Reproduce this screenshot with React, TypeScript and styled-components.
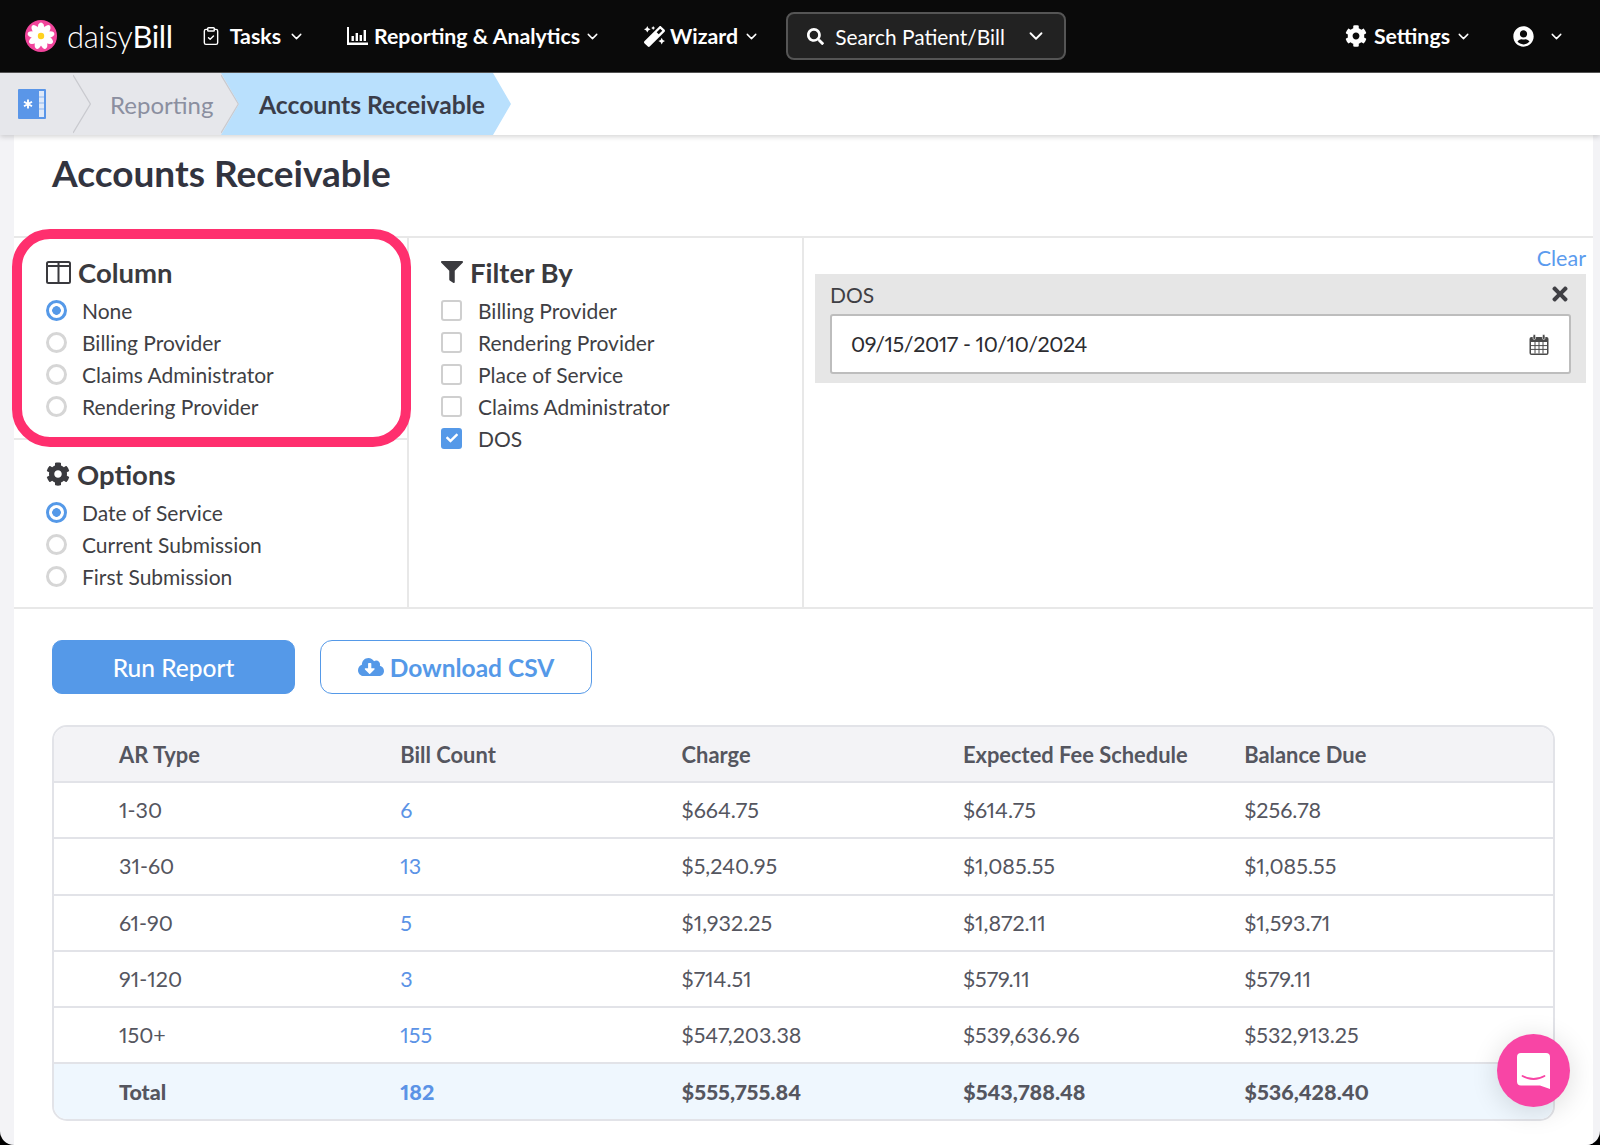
import React from "react"
import styled, { createGlobalStyle } from "styled-components"
import { ChevronDown, ClipboardCheck } from "lucide-react"
import {
  FaCheck,
  FaCloudDownloadAlt,
  FaCog,
  FaFilter,
  FaMagic,
  FaSearch,
  FaTimes,
  FaUserCircle,
} from "react-icons/fa"

const GlobalStyle = createGlobalStyle`
  html, body {
    margin: 0;
    padding: 0;
    background: #000;
  }
  * {
    box-sizing: border-box;
  }
  body {
    font-family: Lato, "Open Sans", Arial, sans-serif;
    font-variant-numeric: proportional-nums;
    color: #3a3a3e;
  }
`

const Page = styled.div`
  height: 1145px;
  overflow: hidden;
  background: #f3f3f6;
  border-radius: 0 0 14px 14px;
`

const Nav = styled.header`
  display: flex;
  align-items: center;
  height: 73px;
  padding-left: 25px;
  background: #0a0a0a;
  border-bottom: 1px solid #555;
  color: #fff;
`

const Brand = styled.div`
  display: flex;
  align-items: center;
  gap: 10px;
  margin-right: 28px;
  font-size: 31px;
  font-weight: 300;
  letter-spacing: -0.4px;

  b {
    font-weight: 400;
  }
`

const NavItem = styled.div<{ $left?: number; $gap?: number }>`
  display: flex;
  align-items: center;
  gap: ${({ $gap }) => $gap ?? 7}px;
  margin-left: ${({ $left }) => $left ?? 0}px;
  font-size: 21.3px;
  font-weight: 700;
  white-space: nowrap;
`

const NavChevron = styled(ChevronDown)<{ $pull?: number }>`
  margin-left: ${({ $pull }) => $pull ?? -2}px;
`

const SearchBox = styled.div`
  display: flex;
  align-items: center;
  width: 280px;
  height: 48px;
  margin-left: 26px;
  padding: 0 17px 0 19px;
  background: #222;
  border: 2px solid #555;
  border-radius: 8px;
  font-size: 20.9px;

  span {
    margin-left: 11px;
    flex: 1;
  }
`

const NavRight = styled.div`
  display: flex;
  align-items: center;
  margin-left: auto;
  padding-right: 35px;
`

const Breadcrumb = styled.nav`
  position: relative;
  display: flex;
  height: 62px;
  background: #fff;
  box-shadow: 0 2px 5px rgba(0, 0, 0, 0.16);
`

const Trail = styled.div`
  display: flex;
  align-items: center;
  width: 239px;
  padding-left: 18px;
  background: #e6e7eb;
`

const TrailGap = styled.span`
  width: 27px;
`

const TrailLink = styled.span`
  width: 103px;
  margin: 0 8px 0 19px;
  font-size: 24px;
  color: #8b8fa0;
  white-space: nowrap;
`

const CurrentCrumb = styled.div`
  display: flex;
  align-items: center;
  width: 290px;
  margin-left: -18px;
  padding-left: 38px;
  background: #b9e0fd;
  font-size: 24.7px;
  font-weight: 700;
  color: #3a3d4a;
  white-space: nowrap;
  clip-path: polygon(
    0 0,
    calc(100% - 18px) 0,
    100% 50%,
    calc(100% - 18px) 100%,
    0 100%,
    18px 50%
  );
`

const Main = styled.main`
  height: 1010px;
  margin: 0 7px 0 14px;
  background: #fff;
`

const Title = styled.h1`
  height: 101px;
  margin: 0;
  padding: 18px 0 0 38px;
  font-size: 37px;
  line-height: 40px;
  font-weight: 700;
  color: #32343f;
`

const Filters = styled.section`
  position: relative;
  display: grid;
  grid-template-columns: 395px 395px 1fr;
  height: 373px;
  border-top: 2px solid #e8e8e8;
  border-bottom: 2px solid #e8e8e8;
`

const Highlight = styled.aside`
  position: absolute;
  left: -2px;
  top: -9px;
  width: 399px;
  height: 218px;
  border: 10px solid #ff2f6e;
  border-radius: 38px;
  pointer-events: none;
`

const Col = styled.div`
  border-right: 2px solid #e8e8e8;

  &:last-of-type {
    border-right: 0;
  }
`

const Group = styled.div<{ $height?: number }>`
  height: ${({ $height }) => ($height ? `${$height}px` : "auto")};
  padding: 18px 0 0 32px;

  & + & {
    border-top: 2px solid #e8e8e8;
  }
`

const GroupTitle = styled.h2`
  display: flex;
  align-items: center;
  gap: 7px;
  height: 32px;
  margin: 0 0 6px;
  font-size: 27.5px;
  font-weight: 700;
  color: #3a3a3e;

  svg {
    flex: none;
  }
`

const Option = styled.div`
  display: flex;
  align-items: center;
  height: 32px;
  font-size: 21px;
  color: #3f3f44;
`

const Radio = styled.span<{ $on?: boolean }>`
  flex: none;
  width: 21px;
  height: 21px;
  margin-right: 15px;
  border-radius: 50%;
  border: 3px solid ${({ $on }) => ($on ? "#5599e8" : "#d6d6d6")};
  background: ${({ $on }) =>
    $on ? "radial-gradient(circle, #5599e8 0 4px, #fff 4.6px)" : "#fff"};
`

const Checkbox = styled.span<{ $on?: boolean }>`
  flex: none;
  display: flex;
  align-items: center;
  justify-content: center;
  width: 21px;
  height: 21px;
  margin-right: 16px;
  border-radius: 3px;
  border: ${({ $on }) => ($on ? "0" : "2px solid #cfcfcf")};
  background: ${({ $on }) => ($on ? "#5599e8" : "#fff")};
  color: #fff;
  font-size: 12px;
`

const ClearRow = styled.div`
  height: 25px;
  margin: 8px 7px 3px 0;
  text-align: right;
  font-size: 21.5px;
  line-height: 25px;
  color: #5b9bee;
`

const DatePanel = styled.div`
  height: 109px;
  margin: 0 7px 0 11px;
  padding: 0 15px;
  background: #e6e6e6;
`

const DateHead = styled.div`
  display: flex;
  align-items: center;
  justify-content: space-between;
  height: 40px;
  font-size: 21px;
  color: #3f3f44;
`

const DateInput = styled.div`
  display: flex;
  align-items: center;
  justify-content: space-between;
  height: 60px;
  padding: 0 20px 0 19px;
  background: #fff;
  border: 2px solid #bdbdbd;
  border-radius: 3px;
  font-size: 21.5px;
  letter-spacing: -0.4px;
  color: #2c2c30;
`

const Actions = styled.div`
  display: flex;
  gap: 25px;
  padding: 31px 0 31px 38px;
`

const Button = styled.button<{ $outline?: boolean }>`
  display: flex;
  align-items: center;
  justify-content: center;
  gap: 6px;
  width: ${({ $outline }) => ($outline ? 272 : 243)}px;
  height: 54px;
  padding: 0;
  border: 1.5px solid #5599e8;
  border-radius: ${({ $outline }) => ($outline ? 12 : 10)}px;
  background: ${({ $outline }) => ($outline ? "#fff" : "#5599e8")};
  color: ${({ $outline }) => ($outline ? "#5599e8" : "#fff")};
  font-family: inherit;
  font-size: 24.5px;
  font-weight: ${({ $outline }) => ($outline ? 700 : 500)};
`

const Table = styled.div`
  margin: 0 38px;
  border: 2px solid #e2e3e8;
  border-radius: 15px;
  overflow: hidden;
  color: #55565f;
  font-size: 21.5px;
`

const Row = styled.div<{ $kind?: "head" | "total" }>`
  display: grid;
  grid-template-columns: repeat(5, 281.3px);
  align-items: center;
  height: ${({ $kind }) => ($kind === "head" ? 54 : 56.3)}px;
  padding-left: 65px;
  background: ${({ $kind }) =>
    $kind === "head" ? "#f3f3f6" : $kind === "total" ? "#eff7fe" : "#fff"};
  font-size: ${({ $kind }) => ($kind === "head" ? 21.9 : 21.5)}px;
  font-weight: ${({ $kind }) => ($kind === "total" ? 900 : $kind === "head" ? 700 : 400)};

  & + & {
    border-top: 2px solid #e2e3e8;
  }
`

const CountLink = styled.span`
  color: #5b93e6;
`

const ChatButton = styled.div`
  position: fixed;
  left: 1497px;
  top: 1034px;
  display: flex;
  align-items: center;
  justify-content: center;
  width: 73px;
  height: 73px;
  border-radius: 50%;
  background: #f845a5;
  box-shadow: 0 4px 28px rgba(0, 0, 0, 0.14);
`

const Flower = () => (
  <svg width="32" height="32" viewBox="0 0 32 32">
    <circle cx="16" cy="16" r="16" fill="#f2459c" />
    {[0, 40, 80, 120, 160, 200, 240, 280, 320].map((deg) => (
      <ellipse
        key={deg}
        cx="16"
        cy="8.4"
        rx="3.4"
        ry="6"
        fill="#fff"
        transform={`rotate(${deg} 16 16)`}
      />
    ))}
    <circle cx="16" cy="16" r="3.2" fill="#ffd21f" />
  </svg>
)

const ChartIcon = () => (
  <svg width="21" height="18" viewBox="0 0 21 18" fill="#fff">
    <path d="M0 0h2v15.5h19V18H0z" />
    <path d="M4.5 9h2.4v5H4.5zM8.6 6h2.4v8H8.6zM12.6 8h2.4v6h-2.4zM16.6 3h2.4v11h-2.4z" />
  </svg>
)

const HomeIcon = () => (
  <svg width="28" height="30" viewBox="0 0 28 30" style={{ flex: "none" }}>
    <rect width="28" height="30" rx="1" fill="#5a96e8" />
    <rect x="21" y="2" width="5" height="26" fill="#dfe9f8" />
    <path d="M21 8h5M21 14h5M21 20h5" stroke="#8db5ee" strokeWidth="1" />
    <path
      d="M10 10.5v9M6 12.7l8 4.6M14 12.7l-8 4.6"
      stroke="#fff"
      strokeWidth="1.9"
      fill="none"
    />
  </svg>
)

const CrumbLine = () => (
  <svg width="18" height="62" viewBox="0 0 18 62" fill="none" style={{ flex: "none" }}>
    <path d="M0 2l17.4 29L0 60" stroke="#c9cacf" strokeWidth="1.3" />
  </svg>
)

const ColumnsIcon = () => (
  <svg width="25" height="23" viewBox="0 0 25 23" fill="none" stroke="#3a3a3e" strokeWidth="2">
    <rect x="1" y="1" width="23" height="21" rx="1.5" />
    <path d="M12.5 1v21M1 5h23" />
  </svg>
)

const CalendarIcon = () => (
  <svg width="20" height="21" viewBox="0 0 20 21">
    <rect x="0.5" y="3" width="19" height="18" rx="2" fill="#4a4a4a" />
    <rect x="4" y="0.5" width="2.6" height="5" rx="1.3" fill="#4a4a4a" stroke="#fff" strokeWidth="0.6" />
    <rect x="13.4" y="0.5" width="2.6" height="5" rx="1.3" fill="#4a4a4a" stroke="#fff" strokeWidth="0.6" />
    <path d="M2 8h16v11.5H2z" fill="#fff" />
    <path
      d="M2 11.6h16M2 15.4h16M6 8v11.5M10 8v11.5M14 8v11.5"
      stroke="#4a4a4a"
      strokeWidth="1"
    />
  </svg>
)

const ChatIcon = () => (
  <svg width="33" height="36" viewBox="0 0 33 36">
    <path
      d="M4 0h25a4 4 0 0 1 4 4v32l-10-3.5H4a4 4 0 0 1-4-4V4a4 4 0 0 1 4-4z"
      fill="#fff"
    />
    <path
      d="M5.5 23c6.5 4 15.5 4 22 0"
      stroke="#f845a5"
      strokeWidth="1.8"
      strokeLinecap="round"
      fill="none"
    />
  </svg>
)

const columnOptions = ["None", "Billing Provider", "Claims Administrator", "Rendering Provider"]
const reportOptions = ["Date of Service", "Current Submission", "First Submission"]
const filterOptions = [
  "Billing Provider",
  "Rendering Provider",
  "Place of Service",
  "Claims Administrator",
  "DOS",
]

const rows = [
  ["1-30", "6", "$664.75", "$614.75", "$256.78"],
  ["31-60", "13", "$5,240.95", "$1,085.55", "$1,085.55"],
  ["61-90", "5", "$1,932.25", "$1,872.11", "$1,593.71"],
  ["91-120", "3", "$714.51", "$579.11", "$579.11"],
  ["150+", "155", "$547,203.38", "$539,636.96", "$532,913.25"],
]

const App: React.FC = () => {
  return (
    <Page>
      <GlobalStyle />
      <Nav>
        <Brand>
          <Flower />
          <span>
            daisy<b>Bill</b>
          </span>
        </Brand>
        <NavItem $gap={9}>
          <ClipboardCheck size={20} strokeWidth={1.7} />
          Tasks
          <NavChevron size={17} strokeWidth={2} />
        </NavItem>
        <NavItem $left={42} $gap={6}>
          <ChartIcon />
          Reporting &amp; Analytics
          <NavChevron size={17} strokeWidth={2} />
        </NavItem>
        <NavItem $left={43} $gap={5}>
          <FaMagic size={21} />
          Wizard
          <NavChevron size={17} strokeWidth={2} $pull={0} />
        </NavItem>
        <SearchBox>
          <FaSearch size={17} />
          <span>Search Patient/Bill</span>
          <ChevronDown size={22} strokeWidth={2} />
        </SearchBox>
        <NavRight>
          <NavItem>
            <FaCog size={22} />
            Settings
            <NavChevron size={17} strokeWidth={2} />
          </NavItem>
          <NavItem $left={41} $gap={14}>
            <FaUserCircle size={21} />
            <ChevronDown size={17} strokeWidth={2} />
          </NavItem>
        </NavRight>
      </Nav>
      <Breadcrumb>
        <Trail>
          <HomeIcon />
          <TrailGap />
          <CrumbLine />
          <TrailLink>Reporting</TrailLink>
          <CrumbLine />
        </Trail>
        <CurrentCrumb>Accounts Receivable</CurrentCrumb>
      </Breadcrumb>
      <Main>
        <Title>Accounts Receivable</Title>
        <Filters>
          <Col>
            <Group $height={200}>
              <GroupTitle>
                <ColumnsIcon />
                Column
              </GroupTitle>
              {columnOptions.map((label, index) => (
                <Option key={label}>
                  <Radio $on={index === 0} />
                  {label}
                </Option>
              ))}
            </Group>
            <Group>
              <GroupTitle>
                <FaCog size={24} />
                Options
              </GroupTitle>
              {reportOptions.map((label, index) => (
                <Option key={label}>
                  <Radio $on={index === 0} />
                  {label}
                </Option>
              ))}
            </Group>
          </Col>
          <Col>
            <Group>
              <GroupTitle>
                <FaFilter size={22} />
                Filter By
              </GroupTitle>
              {filterOptions.map((label) => (
                <Option key={label}>
                  <Checkbox $on={label === "DOS"}>{label === "DOS" && <FaCheck />}</Checkbox>
                  {label}
                </Option>
              ))}
            </Group>
          </Col>
          <Col>
            <ClearRow>Clear</ClearRow>
            <DatePanel>
              <DateHead>
                DOS
                <FaTimes size={22} />
              </DateHead>
              <DateInput>
                09/15/2017 - 10/10/2024
                <CalendarIcon />
              </DateInput>
            </DatePanel>
          </Col>
          <Highlight />
        </Filters>
        <Actions>
          <Button>Run Report</Button>
          <Button $outline>
            <FaCloudDownloadAlt size={26} />
            Download CSV
          </Button>
        </Actions>
        <Table>
          <Row $kind="head">
            <span>AR Type</span>
            <span>Bill Count</span>
            <span>Charge</span>
            <span>Expected Fee Schedule</span>
            <span>Balance Due</span>
          </Row>
          {rows.map((row) => (
            <Row key={row[0]}>
              <span>{row[0]}</span>
              <CountLink>{row[1]}</CountLink>
              <span>{row[2]}</span>
              <span>{row[3]}</span>
              <span>{row[4]}</span>
            </Row>
          ))}
          <Row $kind="total">
            <span>Total</span>
            <CountLink>182</CountLink>
            <span>$555,755.84</span>
            <span>$543,788.48</span>
            <span>$536,428.40</span>
          </Row>
        </Table>
      </Main>
      <ChatButton>
        <ChatIcon />
      </ChatButton>
    </Page>
  )
}

export default App
